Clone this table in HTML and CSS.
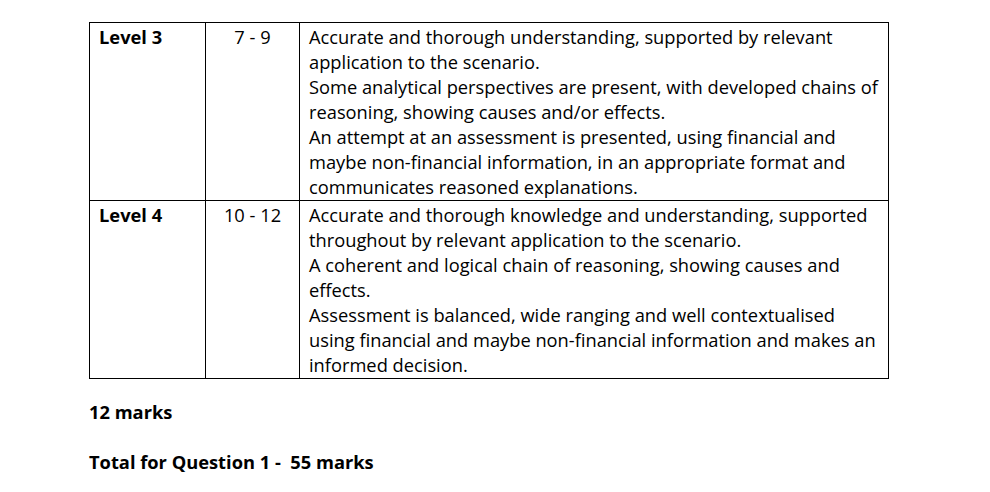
FILE: index.html
```html
<!DOCTYPE html>
<html>
<head>
<meta charset="utf-8">
<link rel="stylesheet" href="styles.css">
</head>
<body>
<div class="page">
<table class="levels">
<colgroup><col class="c1"><col class="c2"><col class="c3"></colgroup>
<tr>
<td class="lvl">Level 3</td>
<td class="mk">7 - 9</td>
<td class="desc">Accurate and thorough understanding, supported by relevant application to the scenario.<br>Some analytical perspectives are present, with developed chains of reasoning, showing causes and/or effects.<br>An attempt at an assessment is presented, using financial and maybe non-financial information, in an appropriate format and communicates reasoned explanations.</td>
</tr>
<tr>
<td class="lvl">Level 4</td>
<td class="mk">10 - 12</td>
<td class="desc">Accurate and thorough knowledge and understanding, supported throughout by relevant application to the scenario.<br>A coherent and logical chain of reasoning, showing causes and effects.<br>Assessment is balanced, wide ranging and well contextualised using financial and maybe non-financial information and makes an informed decision.</td>
</tr>
</table>
<p class="marks">12 marks</p>
<p class="total">Total for Question 1 -&nbsp; 55 marks</p>
</div>
</body>
</html>
```
FILE: styles.css
```css
html, body { margin: 0; padding: 0; background: #fff; }
body { font-family: "Open Sans", "Noto Sans", sans-serif; font-size: 18.3px; line-height: 25px; color: #000; }
.page { padding: 22px 0 0 89px; }
.levels { border-collapse: collapse; width: 800px; }
.c1 { width: 116px; }
.c2 { width: 94px; }
.levels td { border: 1px solid #000; vertical-align: top; padding: 1px 9px 1px 9px; }
.lvl { font-weight: bold; }
.mk { text-align: center; }
.marks, .total { font-weight: bold; margin: 0; }
.marks { margin-top: 20px; }
.total { margin-top: 25px; }
```
